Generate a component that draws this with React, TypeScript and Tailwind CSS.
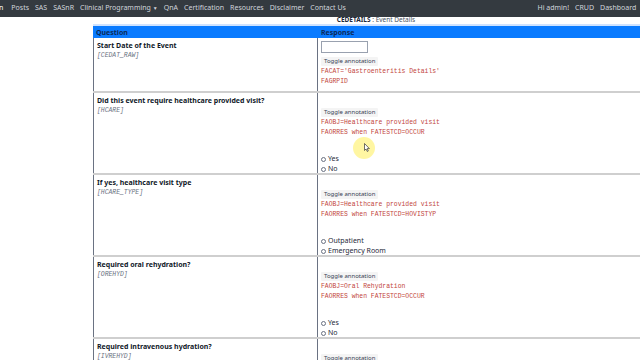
import React from "react";

type Row = {
  title: string;
  code: string;
  annot: string[];
  options?: string[];
  input?: boolean;
};

const rows: Row[] = [
  {
    title: "Start Date of the Event",
    code: "[CEDAT_RAW]",
    annot: ["FACAT='Gastroenteritis Details'", "FAGRPID"],
    input: true,
  },
  {
    title: "Did this event require healthcare provided visit?",
    code: "[HCARE]",
    annot: ["FAOBJ=Healthcare provided visit", "FAORRES when FATESTCD=OCCUR"],
    options: ["Yes", "No"],
  },
  {
    title: "If yes, healthcare visit type",
    code: "[HCARE_TYPE]",
    annot: ["FAOBJ=Healthcare provided visit", "FAORRES when FATESTCD=HOVISTYP"],
    options: ["Outpatient", "Emergency Room"],
  },
  {
    title: "Required oral rehydration?",
    code: "[OREHYD]",
    annot: ["FAOBJ=Oral Rehydration", "FAORRES when FATESTCD=OCCUR"],
    options: ["Yes", "No"],
  },
  {
    title: "Required intravenous hydration?",
    code: "[IVREHYD]",
    annot: [],
  },
];

const navLeft = ["Posts", "SAS", "SASnR", "Clinical Programming", "QnA", "Certification", "Resources", "Disclaimer", "Contact Us"];

function Radio({ label }: { label: string }) {
  return (
    <div className="flex items-center gap-[2px] h-[10px]">
      <span className="w-[5px] h-[5px] rounded-full border border-gray-500 bg-white" />
      <span className="text-[7px] leading-[10px] text-gray-800">{label}</span>
    </div>
  );
}

export default function App() {
  return (
    <div className="relative w-[640px] h-[360px] overflow-hidden bg-white font-['Noto_Sans',sans-serif]">
      <nav className="h-[17px] bg-[#343a40] flex items-center justify-between text-[7px] text-gray-300">
        <div className="flex items-center">
          <span className="text-white pr-[8px] -ml-[1px]">n</span>
          <div className="flex gap-[6px]">
            {navLeft.map((n) => (
              <span key={n}>
                {n}
                {n === "Clinical Programming" && <span className="ml-[2px] text-[5px]">▼</span>}
              </span>
            ))}
          </div>
        </div>
        <div className="flex gap-[6px] -mr-[6px]">
          <span>Hi admin!</span>
          <span>CRUD</span>
          <span>Dashboard</span>
          <span>L</span>
        </div>
      </nav>

      <div className="h-[8px] flex items-center justify-center text-[6.5px] leading-[8px] text-gray-600 -mt-[1px] pl-[112px]">
        <span className="font-bold text-gray-800">CEDETAILS</span>
        <span>&nbsp;: Event Details</span>
      </div>

      <div className="ml-[93px] w-[600px] border-t-2 border-[#cfe3ff] leading-none">
        <div className="flex h-[12px] bg-[#0a7bff] text-[7px] font-bold text-[#0b2a5a] items-center">
          <div className="w-[225px] pl-[3px]">Question</div>
          <div className="flex-1 pl-[3px]">Response</div>
        </div>
        {rows.map((r, i) => (
          <div key={i} className={`flex ${i === 0 ? "h-[55px]" : "h-[82px]"} border-b-2 border-[#cfcfcf] overflow-hidden`}>
            <div className="w-[225px] pl-[3px] pt-[3px] border-l border-r border-gray-500">
              <div className="text-[7px] font-bold text-gray-900 leading-[10px]">{r.title}</div>
              <div className="text-[6.4px] italic text-gray-500 font-['Liberation_Mono',monospace] leading-[10px]">{r.code}</div>
            </div>
            <div className="flex-1 pl-[3px] pt-[3px]">
              {r.input ? (
                <div className="w-[47px] h-[12px] border border-gray-400 bg-white mb-[4px]" />
              ) : (
                <div className="h-[12px]" />
              )}
              <div className="w-fit bg-[#f4f4f4] px-[3px] text-[6px] text-gray-700 leading-[9px] rounded-[1px]">
                Toggle annotation
              </div>
              <div className="font-['Liberation_Mono',monospace] text-[6.4px] text-[#c2463c] leading-[9.5px] mt-[1px]">
                {r.annot.map((a) => (
                  <div key={a}>{a}</div>
                ))}
              </div>
              {r.options && (
                <div className="mt-[17px]">
                  {r.options.map((o) => (
                    <Radio key={o} label={o} />
                  ))}
                </div>
              )}
            </div>
          </div>
        ))}
      </div>

      <div className="absolute left-[353px] top-[137px] w-[22px] h-[22px] rounded-full bg-[#fff27a]/70" />
      <svg className="absolute left-[364px] top-[143px]" width="6" height="9" viewBox="0 0 6 9">
        <path d="M0.5 0.5 L0.5 7.5 L2 6 L3.3 8.5 L4.3 8 L3.2 5.6 L5.4 5.6 Z" fill="#fff" stroke="#333" strokeWidth="0.7" />
      </svg>
    </div>
  );
}
